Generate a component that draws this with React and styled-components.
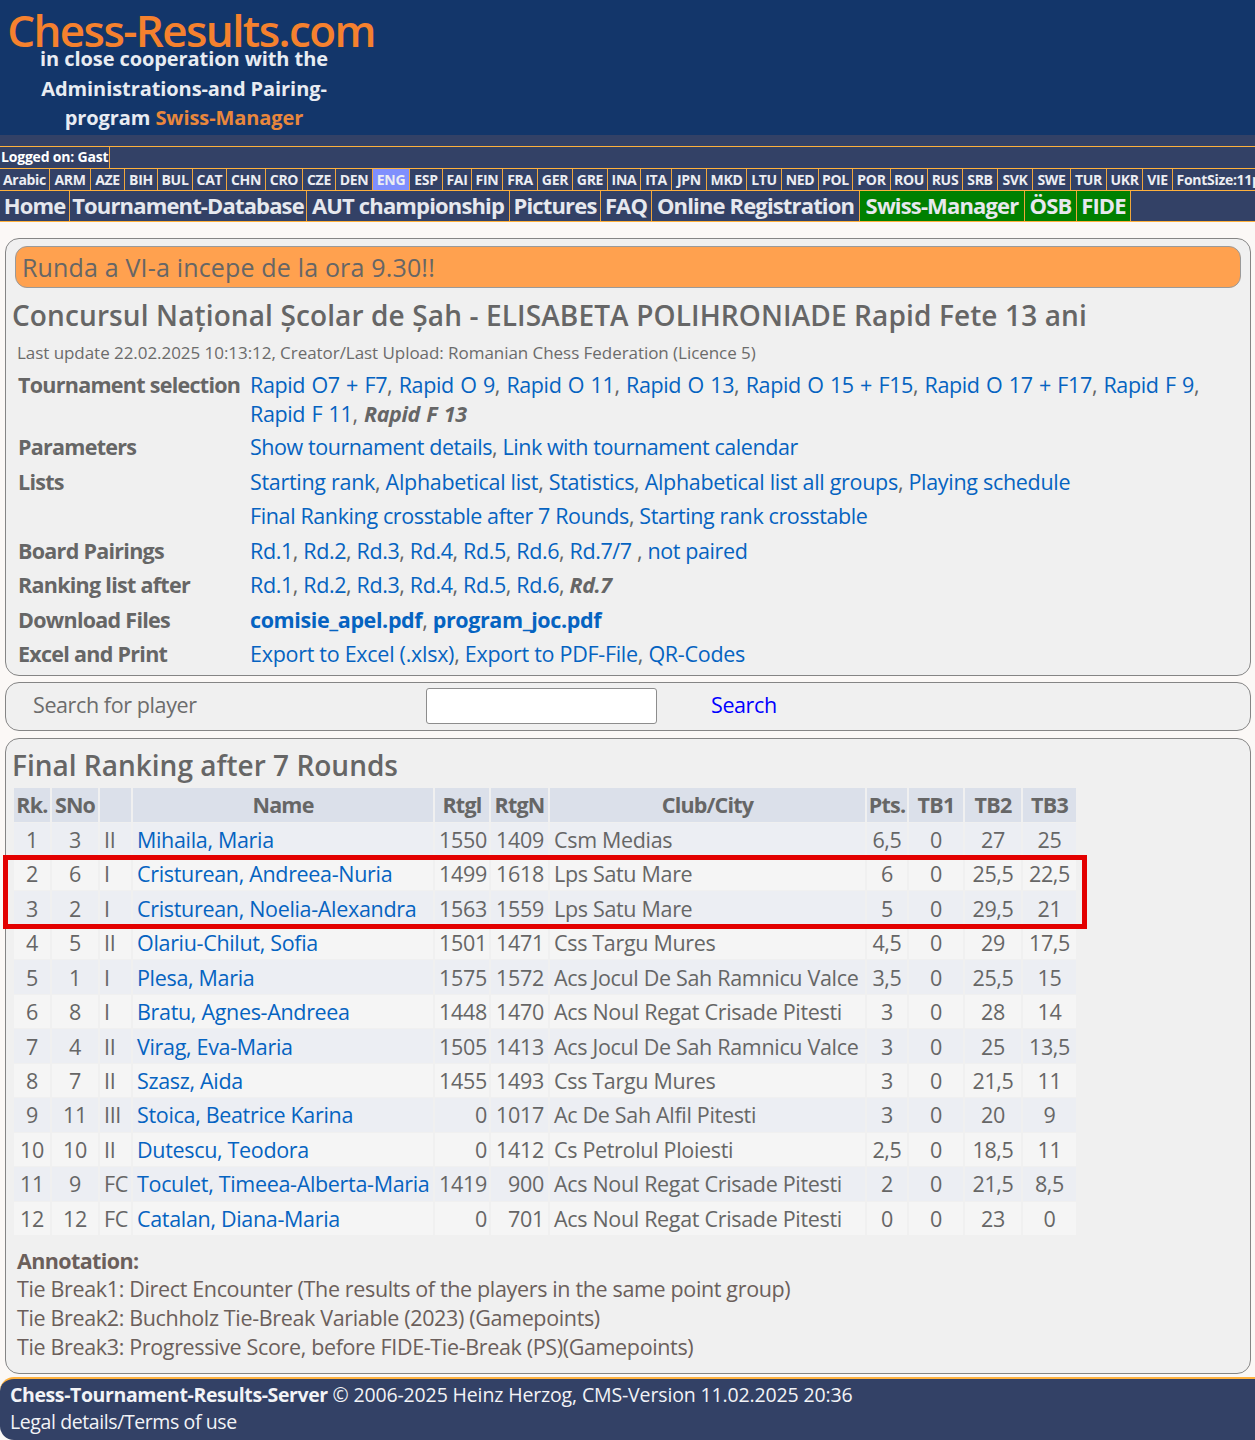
import styled, { createGlobalStyle } from "styled-components";

const GlobalStyle = createGlobalStyle`
  html, body {
    margin: 0;
    padding: 0;
    background: #fbf8f6;
  }
  body {
    font-family: "Open Sans", "Noto Sans", sans-serif;
    color: #666666;
  }
`;

const Page = styled.div`
  width: 1255px;
  height: 1440px;
  overflow: hidden;
  display: flex;
  flex-direction: column;
`;

const Banner = styled.header`
  height: 135px;
  background: #13366a;
  flex: none;
`;

const Logo = styled.div`
  width: 368px;
  margin-left: 7px;
  padding-top: 8px;
  display: flex;
  flex-direction: column;
  align-items: center;
  color: #e8ecf2;
  font-weight: 700;
  font-size: 20px;
  letter-spacing: -0.08px;
`;

const LogoTitle = styled.div`
  font-size: 44px;
  line-height: 44px;
  height: 36px;
  letter-spacing: -1.6px;
  font-weight: 600;
  color: #f5812e;
  white-space: nowrap;
`;

const LogoLine = styled.div`
  height: 29.5px;
  line-height: 29.5px;
  margin-right: 14px;
  white-space: nowrap;
`;

const LogoAccent = styled.span`
  color: #e9873c;
`;

const TopStrip = styled.div`
  height: 12px;
  box-sizing: border-box;
  background: #334166;
  border-bottom: 1px solid #ffb13d;
  flex: none;
`;

const Bar = styled.div`
  display: flex;
  height: ${(p) => p.$height}px;
  box-sizing: border-box;
  background: #334166;
  border-bottom: 1px solid #ffb13d;
  flex: none;
  overflow: hidden;
`;

const SmallCell = styled.div`
  flex: none;
  width: ${(p) => p.$width}px;
  box-sizing: border-box;
  border-right: 1px solid #f0a63c;
  background: ${(p) => (p.$active ? "#7f8ffd" : "transparent")};
  color: #ecedf2;
  font-size: 14px;
  font-weight: 700;
  letter-spacing: -0.3px;
  line-height: 21px;
  text-align: center;
  white-space: nowrap;
`;

const LoggedCell = styled(SmallCell)`
  color: #ffffff;
  letter-spacing: -0.2px;
  line-height: 20px;
  text-align: left;
  padding-left: 1px;
`;

const NavCell = styled.div`
  flex: none;
  width: ${(p) => p.$width}px;
  box-sizing: border-box;
  border-right: 1px solid #f0a63c;
  background: ${(p) => (p.$green ? "#008000" : "transparent")};
  color: #e6e8ee;
  font-size: 22px;
  font-weight: 700;
  letter-spacing: -0.85px;
  line-height: 28px;
  text-align: center;
  white-space: nowrap;
`;

const Panel = styled.section`
  margin: ${(p) => p.$top}px 4px 0 5px;
  box-sizing: border-box;
  height: ${(p) => p.$height}px;
  flex: none;
  border: 1px solid #858585;
  border-radius: 14px;
  background: #f0f0f0;
`;

const Alert = styled.div`
  margin: 7px 9px 0 9px;
  height: 42px;
  box-sizing: border-box;
  border: 1px solid #9a9a9a;
  border-radius: 12px;
  background: #ffa14f;
  padding-left: 6px;
  font-size: 25px;
  letter-spacing: 0.17px;
  line-height: 40px;
`;

const Title = styled.h2`
  margin: ${(p) => p.$top}px 0 0 6px;
  font-size: 28px;
  line-height: 38px;
  font-weight: 600;
  letter-spacing: ${(p) => p.$spacing}px;
  color: #666666;
  white-space: nowrap;
`;

const Update = styled.div`
  margin: 8px 0 0 11px;
  font-size: 17px;
  line-height: 22px;
  letter-spacing: -0.05px;
  color: #6b6b6b;
`;

const InfoGrid = styled.div`
  margin: 3.4px 0 0 12px;
  display: grid;
  grid-template-columns: 232px 1fr;
  font-size: 21.5px;
  line-height: 30px;
  letter-spacing: -0.38px;
`;

const InfoLabel = styled.div`
  font-weight: 700;
  letter-spacing: -0.72px;
  padding: 2.25px 0;
  color: #666666;
  white-space: nowrap;
`;

const InfoValue = styled.div`
  padding: 2.25px 0;
  color: #666666;
  line-height: ${(p) => (p.$wrapped ? "29px" : "30px")};
  word-spacing: ${(p) => (p.$wrapped ? "1.2px" : "0")};
  letter-spacing: ${(p) => (p.$spacing !== undefined ? `${p.$spacing}px` : "inherit")};
`;

const A = styled.a`
  color: #0563c1;
  text-decoration: none;
  white-space: nowrap;
  font-weight: ${(p) => (p.$bold ? 700 : 400)};
`;

const Current = styled.b`
  font-style: italic;
  font-weight: 700;
`;

const SearchRow = styled.div`
  display: flex;
  align-items: center;
  height: 100%;
  box-sizing: border-box;
  padding: 0 0 2px 27px;
  font-size: 21.5px;
  letter-spacing: -0.4px;
`;

const SearchLabel = styled.div`
  width: 393px;
  margin-bottom: 2px;
  color: #6c6c6c;
`;

const SearchInput = styled.input`
  width: 231px;
  height: 36px;
  box-sizing: border-box;
  border: 1px solid #8d8d8d;
  border-radius: 3px;
  background: #ffffff;
`;

const SearchLink = styled.a`
  margin: 0 0 2px 54px;
  color: #0000ff;
`;

const TableWrap = styled.div`
  position: relative;
  margin: 3px 0 0 6px;
`;

const Table = styled.table`
  table-layout: fixed;
  width: 1066px;
  border-collapse: separate;
  border-spacing: 2px 1px;
  font-size: 21.5px;
  letter-spacing: -0.32px;
`;

const Head = styled.th`
  height: 33.5px;
  padding: 0;
  background: #dbe0ea;
  font-weight: 700;
  letter-spacing: -0.8px;
  color: #666666;
  text-align: center;
  white-space: nowrap;
`;

const Row = styled.tr`
  background: ${(p) => (p.$odd ? "#eceef3" : "#f5f5f5")};
`;

const Cell = styled.td`
  height: 33.47px;
  padding: ${(p) => (p.$left ? "0 0 0 4px" : p.$right ? `0 ${p.$right}px 0 0` : "0")};
  text-align: ${(p) => (p.$left ? "left" : p.$right ? "right" : "center")};
  white-space: nowrap;
  color: #666666;
  overflow: hidden;
`;

const Highlight = styled.div`
  position: absolute;
  left: -9px;
  top: 68px;
  width: 1084px;
  height: 74px;
  box-sizing: border-box;
  border: 5px solid #e30000;
  pointer-events: none;
`;

const Annotation = styled.div`
  margin: 10.5px 0 0 11px;
  font-size: 21.5px;
  line-height: 28.7px;
  letter-spacing: -0.35px;
  color: #6b5f5b;
`;

const AnnotationTitle = styled.div`
  font-weight: 700;
  letter-spacing: -0.6px;
`;

const Footer = styled.footer`
  margin-top: 3px;
  flex: 1;
  border-top: 2px solid #ffb13d;
  border-radius: 14px 0 0 14px;
  background: #334166;
  color: #f2f3f6;
  padding: 2px 0 0 10px;
  font-size: 19.5px;
  line-height: 27px;
  letter-spacing: -0.4px;
`;

const Copyright = styled.span`
  letter-spacing: -0.14px;
`;

const langs = [
  ["Arabic", 50], ["ARM", 41], ["AZE", 34], ["BIH", 33], ["BUL", 35], ["CAT", 34],
  ["CHN", 39], ["CRO", 37], ["CZE", 33], ["DEN", 37], ["ENG", 37], ["ESP", 33],
  ["FAI", 29], ["FIN", 31], ["FRA", 35], ["GER", 35], ["GRE", 35], ["INA", 33],
  ["ITA", 31], ["JPN", 35], ["MKD", 40], ["LTU", 35], ["NED", 37], ["POL", 34],
  ["POR", 38], ["ROU", 37], ["RUS", 35], ["SRB", 35], ["SVK", 35], ["SWE", 38],
  ["TUR", 36], ["UKR", 36], ["VIE", 30], ["FontSize:11px", 100],
];

const nav = [
  ["Home", 70], ["Tournament-Database", 237], ["AUT championship", 203], ["Pictures", 91],
  ["FAQ", 51], ["Online Registration", 208], ["Swiss-Manager", 165, true], ["ÖSB", 52, true], ["FIDE", 54, true],
];

const players = [
  [1, 3, "II", "Mihaila, Maria", 1550, 1409, "Csm Medias", "6,5", 0, "27", "25"],
  [2, 6, "I", "Cristurean, Andreea-Nuria", 1499, 1618, "Lps Satu Mare", "6", 0, "25,5", "22,5"],
  [3, 2, "I", "Cristurean, Noelia-Alexandra", 1563, 1559, "Lps Satu Mare", "5", 0, "29,5", "21"],
  [4, 5, "II", "Olariu-Chilut, Sofia", 1501, 1471, "Css Targu Mures", "4,5", 0, "29", "17,5"],
  [5, 1, "I", "Plesa, Maria", 1575, 1572, "Acs Jocul De Sah Ramnicu Valce", "3,5", 0, "25,5", "15"],
  [6, 8, "I", "Bratu, Agnes-Andreea", 1448, 1470, "Acs Noul Regat Crisade Pitesti", "3", 0, "28", "14"],
  [7, 4, "II", "Virag, Eva-Maria", 1505, 1413, "Acs Jocul De Sah Ramnicu Valce", "3", 0, "25", "13,5"],
  [8, 7, "II", "Szasz, Aida", 1455, 1493, "Css Targu Mures", "3", 0, "21,5", "11"],
  [9, 11, "III", "Stoica, Beatrice Karina", 0, 1017, "Ac De Sah Alfil Pitesti", "3", 0, "20", "9"],
  [10, 10, "II", "Dutescu, Teodora", 0, 1412, "Cs Petrolul Ploiesti", "2,5", 0, "18,5", "11"],
  [11, 9, "FC", "Toculet, Timeea-Alberta-Maria", 1419, 900, "Acs Noul Regat Crisade Pitesti", "2", 0, "21,5", "8,5"],
  [12, 12, "FC", "Catalan, Diana-Maria", 0, 701, "Acs Noul Regat Crisade Pitesti", "0", 0, "23", "0"],
];

const columns = [36, 46, 31, 300, 54, 57, 315, 40, 54, 56, 53];

// links separated by a comma, the way the site prints them
function Links({ items }) {
  return items.map((item, i) => (
    <span key={item}>
      {i > 0 && ", "}
      <A href="#">{item}</A>
    </span>
  ));
}

export default function App() {
  return (
    <Page>
      <GlobalStyle />
      <Banner>
        <Logo>
          <LogoTitle>Chess-Results.com</LogoTitle>
          <LogoLine>in close cooperation with the</LogoLine>
          <LogoLine>Administrations-and Pairing-</LogoLine>
          <LogoLine>
            program <LogoAccent>Swiss-Manager</LogoAccent>
          </LogoLine>
        </Logo>
      </Banner>
      <TopStrip />
      <Bar $height={22}>
        <LoggedCell $width={110}>Logged on: Gast</LoggedCell>
      </Bar>
      <Bar $height={22}>
        {langs.map(([label, width]) => (
          <SmallCell key={label} $width={width} $active={label === "ENG"}>
            {label}
          </SmallCell>
        ))}
      </Bar>
      <Bar $height={31}>
        {nav.map(([label, width, green]) => (
          <NavCell key={label} $width={width} $green={green}>
            {label}
          </NavCell>
        ))}
      </Bar>

      <Panel $top={16} $height={438}>
        <Alert>Runda a VI-a incepe de la ora 9.30!!</Alert>
        <Title $top={8} $spacing={0.12}>Concursul Național Școlar de Șah - ELISABETA POLIHRONIADE Rapid Fete 13 ani</Title>
        <Update>Last update 22.02.2025 10:13:12, Creator/Last Upload: Romanian Chess Federation (Licence 5)</Update>
        <InfoGrid>
          <InfoLabel>Tournament selection</InfoLabel>
          <InfoValue $wrapped>
            <Links items={["Rapid O7 + F7", "Rapid O 9", "Rapid O 11", "Rapid O 13", "Rapid O 15 + F15", "Rapid O 17 + F17", "Rapid F 9", "Rapid F 11"]} />
            , <Current>Rapid F 13</Current>
          </InfoValue>
          <InfoLabel>Parameters</InfoLabel>
          <InfoValue $spacing={-0.44}>
            <Links items={["Show tournament details", "Link with tournament calendar"]} />
          </InfoValue>
          <InfoLabel>Lists</InfoLabel>
          <InfoValue $spacing={-0.3}>
            <Links items={["Starting rank", "Alphabetical list", "Statistics", "Alphabetical list all groups", "Playing schedule"]} />
          </InfoValue>
          <InfoLabel />
          <InfoValue>
            <Links items={["Final Ranking crosstable after 7 Rounds", "Starting rank crosstable"]} />
          </InfoValue>
          <InfoLabel>Board Pairings</InfoLabel>
          <InfoValue>
            <Links items={["Rd.1", "Rd.2", "Rd.3", "Rd.4", "Rd.5", "Rd.6", "Rd.7/7"]} />
            {" , "}
            <A href="#">not paired</A>
          </InfoValue>
          <InfoLabel>Ranking list after</InfoLabel>
          <InfoValue>
            <Links items={["Rd.1", "Rd.2", "Rd.3", "Rd.4", "Rd.5", "Rd.6"]} />
            , <Current>Rd.7</Current>
          </InfoValue>
          <InfoLabel>Download Files</InfoLabel>
          <InfoValue>
            <A href="#" $bold>comisie_apel.pdf</A>, <A href="#" $bold>program_joc.pdf</A>
          </InfoValue>
          <InfoLabel>Excel and Print</InfoLabel>
          <InfoValue $spacing={-0.28}>
            <Links items={["Export to Excel (.xlsx)", "Export to PDF-File", "QR-Codes"]} />
          </InfoValue>
        </InfoGrid>
      </Panel>

      <Panel $top={6} $height={49}>
        <SearchRow>
          <SearchLabel>Search for player</SearchLabel>
          <SearchInput type="text" />
          <SearchLink>Search</SearchLink>
        </SearchRow>
      </Panel>

      <Panel $top={7} $height={636}>
        <Title $top={7} $spacing={0}>Final Ranking after 7 Rounds</Title>
        <TableWrap>
          <Table>
            <colgroup>
              {columns.map((width, i) => (
                <col key={i} style={{ width }} />
              ))}
            </colgroup>
            <thead>
              <tr>
                {["Rk.", "SNo", "", "Name", "Rtgl", "RtgN", "Club/City", "Pts.", "TB1", "TB2", "TB3"].map((label, i) => (
                  <Head key={i}>{label}</Head>
                ))}
              </tr>
            </thead>
            <tbody>
              {players.map((p, i) => (
                <Row key={p[0]} $odd={i % 2 === 0}>
                  <Cell>{p[0]}</Cell>
                  <Cell>{p[1]}</Cell>
                  <Cell $left>{p[2]}</Cell>
                  <Cell $left><A href="#">{p[3]}</A></Cell>
                  <Cell $right={2}>{p[4]}</Cell>
                  <Cell $right={4}>{p[5]}</Cell>
                  <Cell $left>{p[6]}</Cell>
                  <Cell>{p[7]}</Cell>
                  <Cell>{p[8]}</Cell>
                  <Cell>{p[9]}</Cell>
                  <Cell>{p[10]}</Cell>
                </Row>
              ))}
            </tbody>
          </Table>
          <Highlight />
        </TableWrap>
        <Annotation>
          <AnnotationTitle>Annotation:</AnnotationTitle>
          <div>Tie Break1: Direct Encounter (The results of the players in the same point group)</div>
          <div>Tie Break2: Buchholz Tie-Break Variable (2023) (Gamepoints)</div>
          <div>Tie Break3: Progressive Score, before FIDE-Tie-Break (PS)(Gamepoints)</div>
        </Annotation>
      </Panel>

      <Footer>
        <div>
          <b>Chess-Tournament-Results-Server</b> <Copyright>© 2006-2025 Heinz Herzog, CMS-Version 11.02.2025 20:36</Copyright>
        </div>
        <div>Legal details/Terms of use</div>
      </Footer>
    </Page>
  );
}
